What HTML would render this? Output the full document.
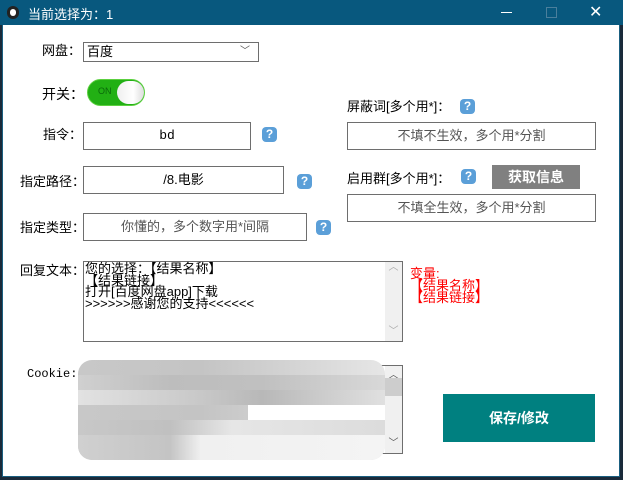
<!DOCTYPE html>
<html><head><meta charset="utf-8"><style>
body{margin:0;width:623px;height:480px;background:#1a2a3a;position:relative;overflow:hidden;font-family:"Liberation Sans","Noto Sans CJK SC",sans-serif;font-size:12px;color:#000}
.a{position:absolute}
.win{left:2px;top:0;width:616px;height:476px;background:#fff;border:1px solid #1a5f80;border-top:none}
.tb{left:0;top:0;width:623px;height:25px;background:#08587e;color:#fff;font-size:13px}
.box{position:absolute;border:1px solid #6e6e6e;background:#fff;box-sizing:border-box;text-align:center;color:#555;font-size:13px}
.q{position:absolute;width:15px;height:15px;border-radius:4px;background:#5b9fd8;color:#fff;font-weight:bold;font-size:12px;text-align:center;line-height:15px}
.lbl{position:absolute;font-size:13px;line-height:16px}
.sb{position:absolute;right:0;top:0;width:17px;bottom:0;background:#f0f0f0;color:#aaa;font-size:10px;text-align:center}
</style></head><body>
<div class="a win"></div>
<div class="a tb">
 <div class="a" style="left:7px;top:6px;width:12px;height:13px;border-radius:6px;background:#222"><div class="a" style="left:3px;top:3px;width:6px;height:7px;border-radius:3px;background:#fff"></div></div>
 <div class="a" style="left:28px;top:4px">当前选择为：1</div>
 <div class="a" style="left:501px;top:12px;width:11px;height:1px;background:#fff"></div>
 <div class="a" style="left:546px;top:7px;width:9px;height:9px;border:1px solid #4a7f9c"></div>
 <div class="a" style="left:589px;top:2px;font-size:16px">✕</div>
</div>
<div class="lbl" style="left:42px;top:43px">网盘：</div>
<div class="box" style="left:83px;top:42px;width:176px;height:20px;text-align:left;color:#000;padding-left:3px;line-height:18px">百度<span class="a" style="right:8px;top:0;color:#555;font-size:10px">﹀</span></div>
<div class="lbl" style="left:42px;top:86px;font-size:14px">开关：</div>
<div class="a" style="left:87px;top:79px;width:58px;height:27px;border-radius:14px;background:#22b014;border:1px solid #5cd040;box-sizing:border-box"><span class="a" style="left:10px;top:6px;font-size:9px;color:#0a6a0a">ON</span><div class="a" style="left:29px;top:1px;width:27px;height:23px;border-radius:12px;background:linear-gradient(90deg,#eee,#fff 60%,#ddd)"></div></div>
<div class="lbl" style="left:43px;top:127px">指令：</div>
<div class="box" style="left:83px;top:122px;width:168px;height:28px;line-height:26px;color:#000;font-family:'Liberation Mono',monospace">bd</div>
<div class="q" style="left:262px;top:127px">?</div>
<div class="lbl" style="left:20px;top:174px">指定路径：</div>
<div class="box" style="left:83px;top:166px;width:201px;height:28px;line-height:26px;color:#000">/8.电影</div>
<div class="q" style="left:297px;top:174px">?</div>
<div class="lbl" style="left:20px;top:220px">指定类型：</div>
<div class="box" style="left:83px;top:213px;width:224px;height:28px;line-height:26px">你懂的，多个数字用*间隔</div>
<div class="q" style="left:316px;top:220px">?</div>
<div class="lbl" style="left:347px;top:99px">屏蔽词[多个用*]：</div>
<div class="q" style="left:460px;top:99px">?</div>
<div class="box" style="left:347px;top:122px;width:249px;height:28px;line-height:26px">不填不生效，多个用*分割</div>
<div class="lbl" style="left:347px;top:171px">启用群[多个用*]：</div>
<div class="q" style="left:461px;top:169px">?</div>
<div class="a" style="left:492px;top:165px;width:88px;height:24px;background:#808080;color:#fff;font-weight:bold;font-size:14px;text-align:center;line-height:24px">获取信息</div>
<div class="box" style="left:347px;top:194px;width:249px;height:28px;line-height:26px">不填全生效，多个用*分割</div>
<div class="lbl" style="left:20px;top:263px">回复文本：</div>
<div class="box" style="left:83px;top:261px;width:320px;height:81px;text-align:left;color:#000;font-size:13px;line-height:11.5px;padding:1px">您的选择：【结果名称】<br>【结果链接】<br>打开[百度网盘app]下载<br>&gt;&gt;&gt;&gt;&gt;&gt;感谢您的支持&lt;&lt;&lt;&lt;&lt;&lt;<div class="sb" style="top:0">︿<div class="a" style="bottom:4px;width:17px">﹀</div></div></div>
<div class="lbl" style="left:410px;top:268px;color:red;line-height:12px">变量:<br>【结果名称】<br>【结果链接】</div>
<div class="lbl" style="left:27px;top:366px;font-family:'Liberation Mono',monospace;font-size:12px">Cookie:</div>
<div class="box" style="left:83px;top:365px;width:320px;height:89px"><div class="sb" style="color:#555">︿<div class="a" style="left:0;top:12px;width:17px;height:18px;background:#cdcdcd"></div><div class="a" style="bottom:4px;width:17px">﹀</div></div></div>
<div class="a" style="left:78px;top:360px;width:307px;height:100px;border-radius:14px;overflow:hidden;background:linear-gradient(90deg,#c8c8c8 0,#c4c4c4 40%,#d4d4d4 70%,#e6e6e6 100%)">
 <div class="a" style="left:0;top:15px;width:307px;height:15px;background:linear-gradient(90deg,#d0d0d0,#bdbdbd 30%,#c0c0c0 60%,#d8d8d8)"></div>
 <div class="a" style="left:0;top:30px;width:307px;height:15px;background:linear-gradient(90deg,#e2e2e2,#c8c8c8 40%,#b8b8b8 60%,#e0e0e0)"></div>
 <div class="a" style="left:170px;top:45px;width:140px;height:20px;background:#fff"></div>
 <div class="a" style="left:0;top:60px;width:307px;height:15px;background:linear-gradient(90deg,#c8c8c8,#c0c0c0 30%,#e6e6e6 50%,#dcdcdc)"></div>
 <div class="a" style="left:0;top:75px;width:307px;height:25px;background:linear-gradient(90deg,#d0d0d0,#c4c4c4 30%,#f0f0f0 40%,#f4f4f4)"></div>
</div>
<div class="a" style="left:443px;top:394px;width:152px;height:48px;background:#008080;color:#fff;font-weight:bold;font-size:14px;text-align:center;line-height:48px">保存/修改</div>
</body></html>
